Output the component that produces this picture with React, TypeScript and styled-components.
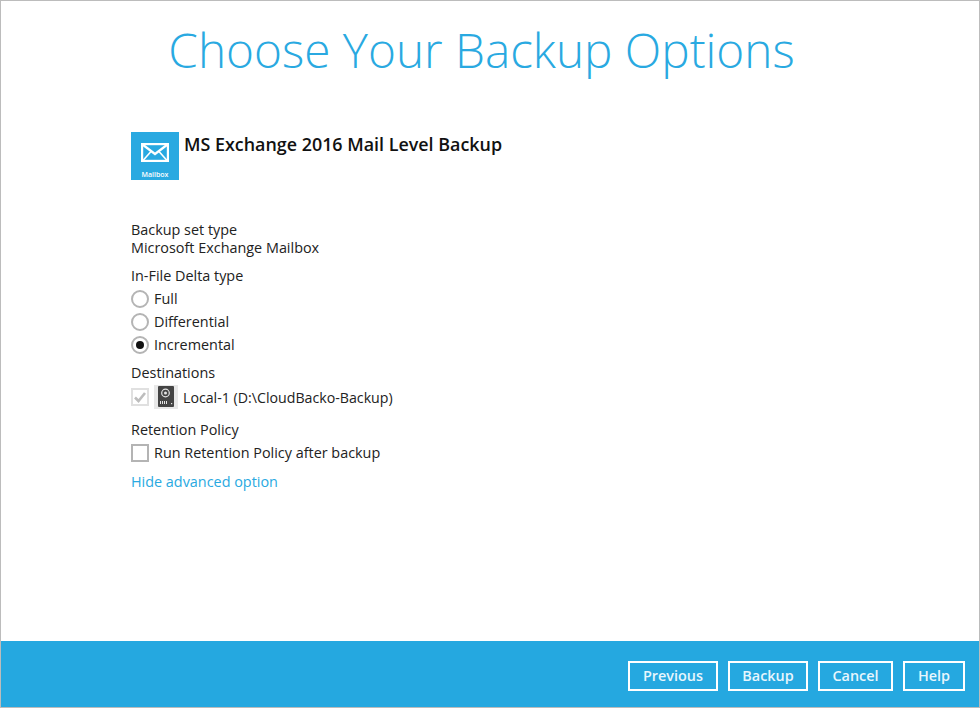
import React from 'react'
import styled, { createGlobalStyle } from 'styled-components'

const GlobalStyle = createGlobalStyle`
  html, body {
    margin: 0;
    padding: 0;
    background: #fff;
  }
  * {
    box-sizing: border-box;
  }
`

const MailIcon = () => (
  <svg width="28" height="19" viewBox="0 0 28 19" fill="none" stroke="#fff" strokeWidth="2.2">
    <rect x="1.1" y="1.1" width="25.8" height="16.8" />
    <path d="M1.5 1.5 L14 11 L26.5 1.5" />
    <path d="M2 17.5 L10 8.5 M26 17.5 L18 8.5" strokeWidth="1.6" />
  </svg>
)

const DriveIcon = () => (
  <svg width="24" height="24" viewBox="0 0 24 24">
    <rect width="24" height="24" fill="#e8e8e8" />
    <rect x="4" y="1" width="16" height="21" rx="1" fill="#444" />
    <circle cx="11.5" cy="8" r="3.8" fill="none" stroke="#e4e4e4" strokeWidth="1.2" />
    <circle cx="11.5" cy="8" r="1.5" fill="#e4e4e4" />
    <path d="M6.5 16v3M8.5 16v3M10.5 16v3M12.5 16v3" stroke="#e4e4e4" strokeWidth="1" />
    <rect x="17" y="18" width="1.2" height="1.2" fill="#e4e4e4" />
  </svg>
)

const App = () => {
  return (
    <Frame>
      <GlobalStyle />
      <Main>
        <Title>Choose Your Backup Options</Title>
        <Content>
          <Header>
            <Tile>
              <MailIcon />
              <TileLabel>Mailbox</TileLabel>
            </Tile>
            <SetName>MS Exchange 2016 Mail Level Backup</SetName>
          </Header>
          <Line>Backup set type</Line>
          <Line>Microsoft Exchange Mailbox</Line>
          <SectionLabel>In-File Delta type</SectionLabel>
          <RadioGroup>
            <RadioRow>
              <Radio />
              <span>Full</span>
            </RadioRow>
            <RadioRow>
              <Radio />
              <span>Differential</span>
            </RadioRow>
            <RadioRow>
              <Radio $checked />
              <span>Incremental</span>
            </RadioRow>
          </RadioGroup>
          <SectionLabel $gap={7}>Destinations</SectionLabel>
          <DestinationRow>
            <DisabledCheck>
              <svg width="14" height="12" viewBox="0 0 14 12" fill="none" stroke="#bdbdbd" strokeWidth="2.6">
                <path d="M2 6.5 L5.5 10 L12 2" />
              </svg>
            </DisabledCheck>
            <DriveIcon />
            <DestinationName>Local-1 (D:\CloudBacko-Backup)</DestinationName>
          </DestinationRow>
          <SectionLabel $gap={11}>Retention Policy</SectionLabel>
          <CheckRow>
            <CheckBox />
            <span>Run Retention Policy after backup</span>
          </CheckRow>
          <LinkText>Hide advanced option</LinkText>
        </Content>
      </Main>
      <Footer>
        <FooterButton $width={90}>Previous</FooterButton>
        <FooterButton $width={80}>Backup</FooterButton>
        <FooterButton $width={75}>Cancel</FooterButton>
        <FooterButton $width={62}>Help</FooterButton>
      </Footer>
    </Frame>
  )
}
export default App

const Frame = styled.div`
  width: 980px;
  height: 708px;
  display: flex;
  flex-direction: column;
  border: 1px solid #bcbcbc;
  background: #fff;
  font-family: 'Open Sans', 'Liberation Sans', sans-serif;
  font-size: 14.4px;
  color: #222;
`
const Main = styled.div`
  flex: 1;
`
const Title = styled.h1`
  margin: 15px 0 0;
  height: 116px;
  padding-right: 17px;
  text-align: center;
  font-size: 47.7px;
  line-height: 68px;
  font-weight: 300;
  color: #29a9e1;
`
const Content = styled.div`
  padding-left: 130px;
`
const Header = styled.div`
  display: flex;
  gap: 5px;
  height: 48px;
  margin-bottom: 41px;
`
const Tile = styled.div`
  width: 48px;
  height: 48px;
  background: #29a9e1;
  display: flex;
  flex-direction: column;
  align-items: center;
  padding-top: 11px;
`
const TileLabel = styled.div`
  margin-top: 8px;
  font-size: 7px;
  line-height: 10px;
  font-weight: 600;
  color: #fff;
`
const SetName = styled.div`
  font-size: 17.9px;
  line-height: 24px;
  font-weight: 600;
  color: #111;
`
const Line = styled.div`
  line-height: 18px;
`
const SectionLabel = styled.div<{ $gap?: number }>`
  line-height: 19px;
  margin-top: ${(p) => p.$gap ?? 9}px;
`
const RadioGroup = styled.div`
  margin-top: 2px;
`
const RadioRow = styled.div`
  display: flex;
  align-items: center;
  gap: 5px;
  height: 23px;
`
const Radio = styled.span<{ $checked?: boolean }>`
  width: 18px;
  height: 18px;
  border-radius: 50%;
  border: 2px solid #b4b4b4;
  background: #fff;
  display: flex;
  align-items: center;
  justify-content: center;
  &::after {
    content: '';
    width: 8px;
    height: 8px;
    border-radius: 50%;
    background: ${(p) => (p.$checked ? '#111' : 'transparent')};
  }
`
const DestinationRow = styled.div`
  display: flex;
  align-items: center;
  gap: 5px;
  height: 24px;
  margin-top: 3px;
`
const DestinationName = styled.span`
  font-size: 14.2px;
`
const DisabledCheck = styled.span`
  width: 18px;
  height: 18px;
  border: 2px solid #e0e0e0;
  display: flex;
  align-items: center;
  justify-content: center;
`
const CheckRow = styled.div`
  display: flex;
  align-items: center;
  gap: 5px;
  height: 23px;
  margin-top: 2px;
`
const CheckBox = styled.span`
  width: 18px;
  height: 18px;
  border: 2px solid #b4b4b4;
  background: #fff;
`
const LinkText = styled.div`
  margin-top: 8px;
  line-height: 19px;
  color: #29a9e1;
`
const Footer = styled.div`
  height: 66px;
  flex-shrink: 0;
  background: #25a8e0;
  display: flex;
  justify-content: flex-end;
  align-items: center;
  gap: 10px;
  padding: 4px 14px 0 0;
`
const FooterButton = styled.div<{ $width: number }>`
  width: ${(p) => p.$width}px;
  height: 30px;
  padding-bottom: 2px;
  border: 2px solid #fff;
  display: flex;
  align-items: center;
  justify-content: center;
  color: #e8f6fd;
  font-size: 14.4px;
  font-weight: 600;
`
